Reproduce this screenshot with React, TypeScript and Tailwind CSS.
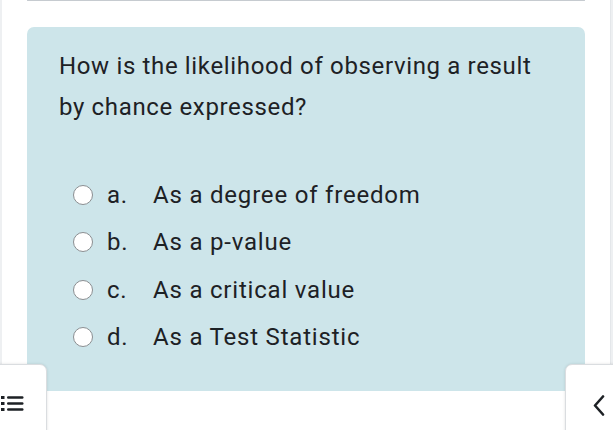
import React from 'react';

const options = [
  { key: 'a.', label: 'As a degree of freedom' },
  { key: 'b.', label: 'As a p-value' },
  { key: 'c.', label: 'As a critical value' },
  { key: 'd.', label: 'As a Test Statistic' },
];

export default function App() {
  return (
    <div
      className="relative flex w-[613px] h-[430px] overflow-hidden bg-white text-[#1d2125]"
      style={{ fontFamily: 'Roboto, "Noto Sans", sans-serif' }}
    >
      <div className="w-[2px] shrink-0 bg-[#eef0f2]" />

      {/* Main column */}
      <div className="flex-1 flex flex-col px-[25px]">
        {/* previous question box, scrolled away */}
        <div className="h-[2px] border-x border-b border-[#c6cbd0] rounded-b-[4px]" />

        {/* Question card */}
        <div className="mt-[26px] bg-[#cde5ea] rounded-t-[7px] pl-[32px] pr-[40px] pt-[19px] pb-[80px]">
          <p className="text-[24px] leading-[41px] tracking-[0.65px]">
            How is the likelihood of observing a result by chance expressed?
          </p>

          <div className="mt-[43px] flex flex-col">
            {options.map((o) => (
              <label key={o.key} className="flex items-center h-[47.5px] text-[24px] tracking-[0.8px]">
                <span className="ml-[14px] w-[20px] h-[20px] rounded-full border-[1.5px] border-[#8b8e91] bg-white shrink-0" />
                <span className="ml-[14px] w-[46px]">{o.key}</span>
                <span>{o.label}</span>
              </label>
            ))}
          </div>
        </div>
      </div>

      <div className="w-[3px] shrink-0 bg-[#eef0f2] border-l border-[#e4e7ea]" />

      {/* Sticky footer over content */}
      <div className="absolute left-0 right-0 bottom-0 h-[39px] bg-white" />

      {/* Course index toggle */}
      <button className="absolute left-[-2px] top-[364px] w-[49px] h-[70px] bg-white border border-[#dadde0] rounded-tr-[7px] shadow-[0_0_3px_rgba(0,0,0,0.12)] flex items-start pt-[29px] pl-[2px]">
        <svg width="24" height="18" viewBox="0 0 24 18" fill="#1d2125">
          <rect x="0" y="2" width="3.5" height="3" />
          <rect x="6" y="2.2" width="16.5" height="2.6" rx="1.2" />
          <rect x="0" y="8" width="3.5" height="3" />
          <rect x="6" y="8.2" width="16.5" height="2.6" rx="1.2" />
          <rect x="0" y="14" width="3.5" height="3" />
          <rect x="6" y="14.2" width="16.5" height="2.6" rx="1.2" />
        </svg>
      </button>

      {/* Block drawer toggle */}
      <button className="absolute left-[565px] top-[364px] w-[52px] h-[70px] bg-white border border-[#dadde0] rounded-tl-[7px] shadow-[0_0_3px_rgba(0,0,0,0.12)] flex items-start pt-[30px] pl-[27px]">
        <svg width="12" height="22" viewBox="0 0 12 22" fill="none" stroke="#1d2125" strokeWidth="2.6" strokeLinecap="round" strokeLinejoin="round">
          <path d="M10 1.5 L2 10.5 L10 19.5" />
        </svg>
      </button>
    </div>
  );
}
